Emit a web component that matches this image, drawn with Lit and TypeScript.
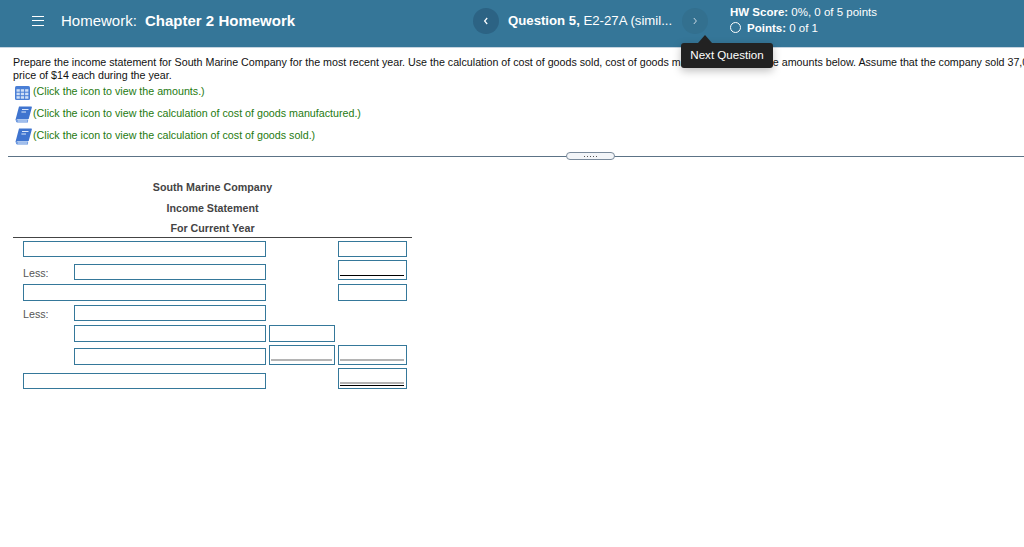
import { LitElement, html, css, svg } from "lit";
import { customElement } from "lit/decorators.js";

const gridIcon = html`<svg class="ico grid-ico" viewBox="0 0 15 14" width="15" height="14">
  <rect x="0" y="0" width="15" height="14" rx="1.5" fill="#4a7fd6"/>
  ${[0, 1, 2].map((r) =>
    [0, 1, 2].map(
      (c) => svg`<rect x="${1.5 + c * 4.3}" y="${3.2 + r * 3.5}" width="3.3" height="2.5" fill="#cfdff6"/>`
    )
  )}
</svg>`;

const bookIcon = html`<svg class="ico book-ico" viewBox="0 0 17 17" width="17" height="17">
  <path d="M4 .4h12.300c.4 0 .7.400.6.800L13.700 13H3.200C2.200 13 1.500 13.500 1.300 14.500L.4 14.200z" fill="#3f74cf"/>
  <path d="M1 14.800c.2-.8.900-1.200 2-1.200h10.200l-.3 3H2.800C1.600 16.600.8 15.800 1 14.800z" fill="#5f8fdd"/>
  <path d="M2.600 15h9.800" stroke="#e3edfb" stroke-width="1" fill="none"/>
  <path d="M7 3.500h6.500M6.400 6h4.600" stroke="#dbe7f9" stroke-width="1.100" fill="none"/>
</svg>`;

@customElement("app-root")
export class AppRoot extends LitElement {
  static styles = css`
    :host {
      display: block;
      width: 1024px;
      height: 547px;
      overflow: hidden;
      position: relative;
      background: #fff;
      font-family: "Liberation Sans", Arial, sans-serif;
      color: #111;
    }
    .top {
      height: 47px;
      background: #357698;
      border-bottom: 1px solid #c6d4e0;
      color: #fff;
      display: flex;
      align-items: center;
    }
    .burger {
      margin: -6px 0 0 32px;
      width: 12px;
      height: 10px;
      display: flex;
      flex-direction: column;
      justify-content: space-between;
    }
    .burger i {
      display: block;
      height: 1px;
      background: #fff;
    }
    .title {
      margin: -6px 0 0 17px;
      width: 412px;
      font-size: 15px;
      white-space: nowrap;
    }
    .title b {
      margin-left: 4px;
    }
    .circ {
      width: 26px;
      height: 26px;
      border-radius: 50%;
      display: flex;
      align-items: center;
      justify-content: center;
      flex: none;
      margin-top: -6px;
    }
    .circ svg {
      display: block;
    }
    .prev {
      background: #2c6384;
    }
    .next {
      background: #33708f;
    }
    .q {
      margin: -6px 0 0 9px;
      width: 174px;
      font-size: 13.2px;
      white-space: nowrap;
    }
    .score {
      margin: -8px 0 0 22px;
      font-size: 11.500px;
      line-height: 16px;
    }
    .score .pts {
      display: flex;
      align-items: center;
      gap: 6px;
    }
    .ring {
      width: 9px;
      height: 9px;
      border: 1.500px solid #fff;
      border-radius: 50%;
      display: block;
    }
    .tip {
      position: absolute;
      left: 681px;
      top: 43px;
      width: 92px;
      height: 25px;
      padding-bottom: 2px;
      box-sizing: border-box;
      background: #222;
      border-radius: 3px;
      color: #fff;
      font-size: 11.600px;
      display: flex;
      align-items: center;
      justify-content: center;
      box-shadow: 0 3px 8px rgba(0, 0, 0, 0.25);
    }
    .tip::before {
      content: "";
      position: absolute;
      left: 17px;
      top: -8px;
      border-left: 7px solid transparent;
      border-right: 7px solid transparent;
      border-bottom: 8px solid #222;
    }
    .body {
      padding: 8px 0 0 13px;
      font-size: 10.700px;
      line-height: 13px;
    }
    .p {
      white-space: nowrap;
    }
    .links {
      margin: 1px 0 0 2px;
      color: #1e7a10;
    }
    .link {
      display: flex;
      align-items: center;
      gap: 1px;
      height: 16px;
      white-space: nowrap;
    }
    .link + .link {
      margin-top: 6px;
    }
    .ico {
      flex: none;
      display: block;
    }
    .grid-ico {
      margin: 4px 2px 0 0;
    }
    .book-ico {
      margin: 2px 0 0 0;
    }
    .rule {
      margin: 13px 0 0 8px;
      height: 1px;
      background: #5c7386;
      position: relative;
    }
    .grip {
      position: absolute;
      left: 558px;
      top: -4px;
      width: 49px;
      height: 8px;
      box-sizing: border-box;
      background: #f3f5f8;
      border: 1px solid #7a8a9b;
      border-radius: 4px;
      display: flex;
      justify-content: center;
      align-items: center;
      gap: 2px;
    }
    .grip i {
      width: 1px;
      height: 1px;
      background: #555;
    }
    .sheet {
      width: 399px;
      margin: 20px 0 0 13px;
      color: #444;
      font-size: 10.700px;
    }
    .heads {
      box-sizing: border-box;
      height: 61px;
      border-bottom: 1px solid #444;
      font-weight: bold;
      text-align: center;
      line-height: 20.500px;
    }
    .grid {
      display: grid;
      margin-top: 3px;
      padding-left: 10px;
      grid-template-columns: 51px 192px 3px 66px 3px 69px;
      grid-template-rows: 16px 20px 18px 17px 18px 20px 21px;
      row-gap: 3px;
      align-items: end;
    }
    .less {
      grid-column: 1;
      color: #555;
      line-height: 14px;
    }
    .in {
      box-sizing: border-box;
      border: 1px solid #35789a;
      background: #fff;
      position: relative;
    }
    .full {
      grid-column: 1 / 3;
    }
    .sub {
      grid-column: 2;
    }
    .mid {
      grid-column: 4;
    }
    .right {
      grid-column: 6;
    }
    .fill {
      height: 100%;
    }
    .h16 {
      height: 16px;
    }
    .h17 {
      height: 17px;
    }
    .r1 { grid-row: 1; }
    .r2 { grid-row: 2; }
    .r3 { grid-row: 3; }
    .r4 { grid-row: 4; }
    .r5 { grid-row: 5; }
    .r6 { grid-row: 6; }
    .r7 { grid-row: 7; }
    .in.under::after,
    .in.grey::after,
    .in.dbl::after,
    .in.dbl::before {
      content: "";
      position: absolute;
      left: 1px;
      right: 2px;
    }
    .in.under::after {
      bottom: 3px;
      height: 1px;
      background: #000;
    }
    .in.grey::after {
      bottom: 3px;
      height: 2px;
      background: #b4b4b4;
    }
    .in.dbl::before {
      bottom: 4px;
      height: 2px;
      background: #b4b4b4;
    }
    .in.dbl::after {
      bottom: 2px;
      height: 1px;
      background: #000;
    }
  `;

  render() {
    return html`
      <header class="top">
        <div class="burger"><i></i><i></i><i></i></div>
        <div class="title">Homework: <b>Chapter 2 Homework</b></div>
        <div class="circ prev">
          <svg width="6" height="8" viewBox="0 0 6 8"><path d="M4.200 1 1.600 4l2.600 3" fill="none" stroke="#fff" stroke-width="1.200"/></svg>
        </div>
        <div class="q"><b>Question 5,</b> E2-27A (simil...</div>
        <div class="circ next">
          <svg width="6" height="8" viewBox="0 0 6 8"><path d="M1.800 1 4.400 4 1.800 7" fill="none" stroke="#c9d8e3" stroke-width="1"/></svg>
        </div>
        <div class="score">
          <div><b>HW Score:</b> 0%, 0 of 5 points</div>
          <div class="pts"><span class="ring"></span><span><b>Points:</b> 0 of 1</span></div>
        </div>
      </header>
      <div class="tip">Next Question</div>
      <main class="body">
        <div class="p">
          Prepare the income statement for South Marine Company for the most recent year. Use the calculation of cost of goods sold, cost of goods manufactured, and the amounts below. Assume that the company sold 37,000 units at a selling<br />price of $14 each during the year.
        </div>
        <div class="links">
          <div class="link">${gridIcon}(Click the icon to view the amounts.)</div>
          <div class="link">${bookIcon}(Click the icon to view the calculation of cost of goods manufactured.)</div>
          <div class="link">${bookIcon}(Click the icon to view the calculation of cost of goods sold.)</div>
        </div>
      </main>
      <div class="rule">
        <div class="grip"><i></i><i></i><i></i><i></i><i></i></div>
      </div>
      <section class="sheet">
        <div class="heads">
          <div>South Marine Company</div>
          <div>Income Statement</div>
          <div>For Current Year</div>
        </div>
        <div class="grid">
          <div class="in full fill r1"></div>
          <div class="in right fill r1"></div>

          <div class="less r2">Less:</div>
          <div class="in sub h16 r2"></div>
          <div class="in right fill under r2"></div>

          <div class="in full h17 r3"></div>
          <div class="in right h17 r3"></div>

          <div class="less r4">Less:</div>
          <div class="in sub h16 r4"></div>

          <div class="in sub h17 r5"></div>
          <div class="in mid h17 r5"></div>

          <div class="in sub h17 r6"></div>
          <div class="in mid fill grey r6"></div>
          <div class="in right fill grey r6"></div>

          <div class="in full h16 r7"></div>
          <div class="in right fill dbl r7"></div>
        </div>
      </section>
    `;
  }
}
